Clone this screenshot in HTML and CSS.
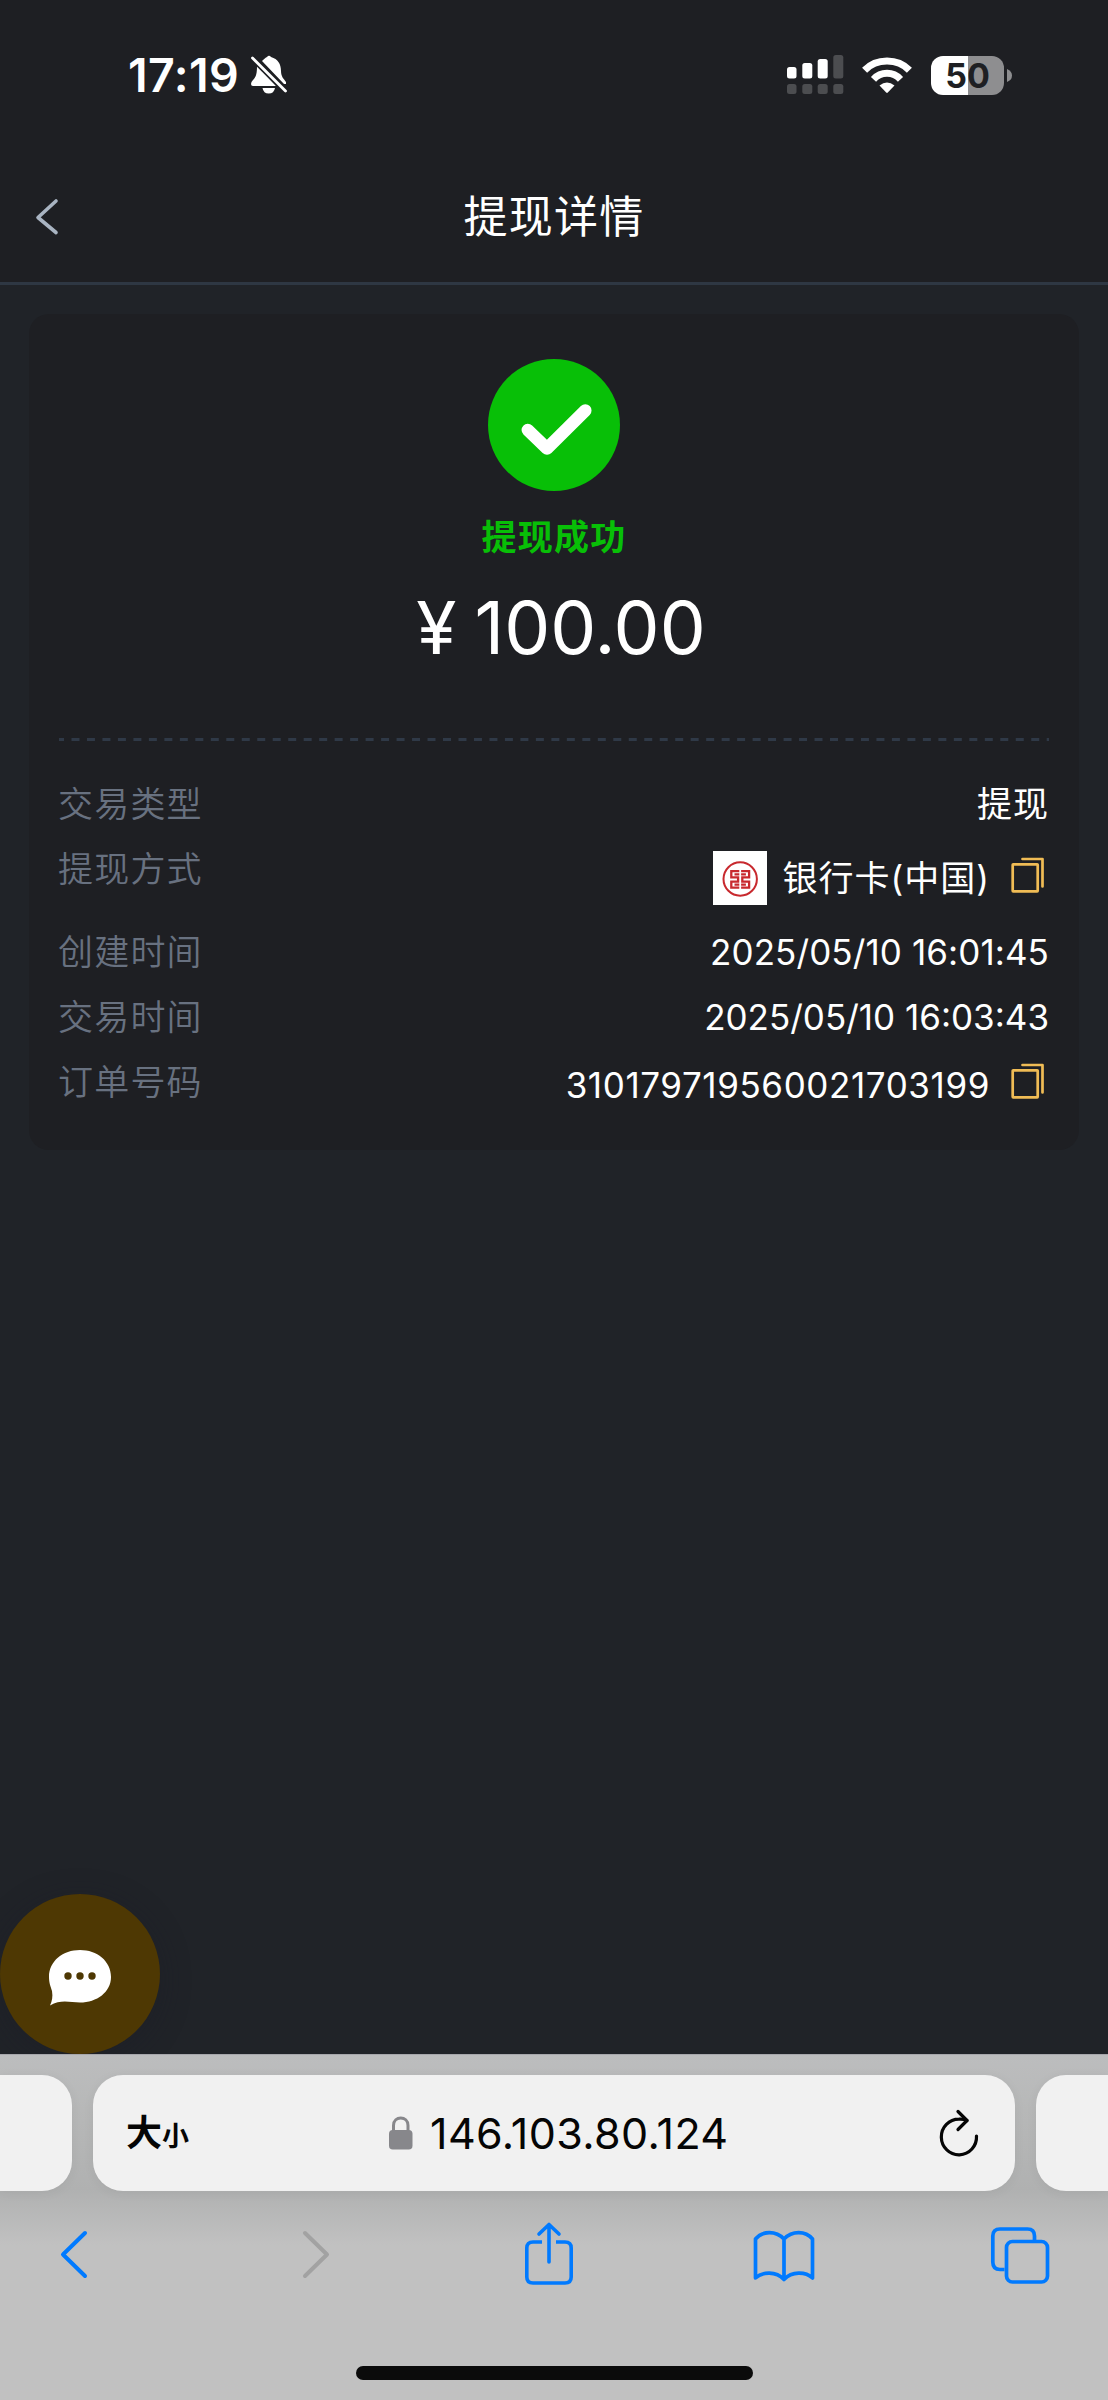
FILE: index.html
```html
<!DOCTYPE html>
<html lang="zh-CN">
<head>
<meta charset="utf-8">
<title>提现详情</title>
<link rel="stylesheet" href="styles.css">
</head>
<body>
<div class="screen">
  <div class="status">
    <span class="clock">17:19</span>
    <svg class="bell" width="38" height="42" viewBox="0 0 38 42">
      <path fill="#fff" d="M12 7C14 5 15 4 17 3Q19 .5 21 3C28 5 31 10 31 17C31 23 34 25 36 28V30H34ZM7 12L26 32H3Q1 32 1 30Q1 28 3 26C6 23 7 20 7 12ZM12.500 34H25Q24 39.500 18.700 39.500Q13.500 39.500 12.500 34Z"/>
      <path fill="none" stroke="#1e1f23" stroke-width="6" d="M2.500 4L35.500 37"/>
      <path fill="none" stroke="#fff" stroke-width="2.800" stroke-linecap="round" d="M2.500 4L35.500 37"/>
    </svg>
    <svg class="signal" width="57" height="40" viewBox="0 0 57 40">
      <g fill="#fff"><rect x="0" y="12" width="9.500" height="11.500" rx="2.500"/><rect x="15.300" y="8" width="10" height="15.500" rx="2.500"/><rect x="30.700" y="4" width="10" height="19.500" rx="2.500"/></g>
      <g fill="#4c4d50"><rect x="46.300" y="0" width="10" height="23.500" rx="2.500"/><rect x="0" y="29" width="9.500" height="10" rx="2.500"/><rect x="15.300" y="29" width="10" height="10" rx="2.500"/><rect x="30.700" y="29" width="10" height="10" rx="2.500"/><rect x="46.300" y="29" width="10" height="10" rx="2.500"/></g>
    </svg>
    <svg class="wifi" width="50" height="37" viewBox="0 0 50 37">
      <g fill="none" stroke="#fff" stroke-width="7">
        <path d="M2.600 13.200Q11.500 4 25 4Q38.500 4 47.400 13.200"/><path d="M11.500 22.300Q17 16.300 25 16.300Q33 16.300 38.500 22.300"/>
      </g>
      <path fill="#fff" d="M17.500 28.500Q25 22.500 32.500 28.500L25.800 35.600Q25 36.400 24.200 35.600Z"/>
    </svg>
    <div class="battery"><span>50</span></div>
    <svg class="nub" width="5" height="13" viewBox="0 0 5 13"><path fill="#8e8e90" d="M0 0Q5 2 5 6.500Q5 11 0 13Z"/></svg>
  </div>
  <header class="nav">
    <svg width="24" height="38" viewBox="0 0 24 38"><path fill="none" stroke="#a9b4c2" stroke-width="3.600" stroke-linecap="round" stroke-linejoin="round" d="M21 3L3 19.500L21 34.500"/></svg>
    <h1>提现详情</h1>
  </header>
  <main>
    <section class="card">
      <svg class="ok" width="132" height="132" viewBox="0 0 132 132"><circle cx="66" cy="66" r="66" fill="#08bf07"/><path fill="none" stroke="#fff" stroke-width="12.500" stroke-linecap="round" stroke-linejoin="round" d="M39.800 71L59 89.500L97.300 51.500"/></svg>
      <p class="state">提现成功</p>
      <p class="amount"><span>¥</span>100.00</p>
      <svg class="dash" width="990" height="3" viewBox="0 0 990 3"><path stroke="#2f3947" stroke-width="3" stroke-dasharray="8 7.480" stroke-dashoffset="3" d="M0 1.500H990"/></svg>
      <dl>
        <div class="row"><dt>交易类型</dt><dd class="cjk">提现</dd></div>
        <div class="row method"><dt>提现方式</dt><dd>
          <svg class="bank" width="54" height="54" viewBox="0 0 54 54"><path fill="#fff" d="M0 0H54V54H0Z"/><circle cx="27.200" cy="28" r="16.700" fill="none" stroke="#c8292e" stroke-width="2"/><path fill="none" stroke="#c8292e" stroke-width="2.300" d="M26.300 20.200H18.300V26.300H25.100V30.600H18.300V36.700H26.300M28.100 20.200H36.100V26.300H29.300V30.600H36.100V36.700H28.100M21.500 23.300H26.300M28.100 23.300H32.900M21.500 33.600H26.300M28.100 33.600H32.900"/></svg>
          <span class="cjk">银行卡(中国)</span>
          <svg class="copy" width="34" height="36" viewBox="0 0 34 36"><g fill="none" stroke="#f0bc55" stroke-width="2.700" stroke-linejoin="round" stroke-linecap="round"><rect x="1.700" y="7.300" width="25" height="27" rx=".5"/><path d="M11.500 2H31.500V29.500"/></g></svg>
        </dd></div>
        <div class="row"><dt>创建时间</dt><dd class="created">2025/05/10 16:01:45</dd></div>
        <div class="row"><dt>交易时间</dt><dd>2025/05/10 16:03:43</dd></div>
        <div class="row order"><dt>订单号码</dt><dd>
          <span class="number">310179719560021703199</span>
          <svg class="copy" width="34" height="36" viewBox="0 0 34 36"><g fill="none" stroke="#f0bc55" stroke-width="2.700" stroke-linejoin="round" stroke-linecap="round"><rect x="1.700" y="7.300" width="25" height="27" rx=".5"/><path d="M11.500 2H31.500V29.500"/></g></svg>
        </dd></div>
      </dl>
    </section>
    <div class="chat"><svg width="64" height="58" viewBox="0 0 64 58"><path fill="#fff" d="M32 1C49 1 63 12 63 28C63 43 49 53.500 32 53.500C22 53.500 13 50 2 56.500C4 52 5 48 4 42C2.500 37 1 34 1 28C1 12 15 1 32 1Z"/><g fill="#4e3803"><circle cx="20" cy="27" r="3.700"/><circle cx="32" cy="27" r="3.700"/><circle cx="44" cy="27" r="3.700"/></g></svg></div>
  </main>
  <footer class="safari">
    <div class="tabs">
      <div class="tab side left"></div>
      <div class="tab address">
        <span class="size">大<small>小</small></span>
        <svg class="lock" width="24" height="34" viewBox="0 0 24 34"><path fill="none" stroke="#87878b" stroke-width="3" d="M4.500 16V9.500C4.500-.5 19-.5 19 9.500V16"/><rect y="14" width="23.500" height="19.500" rx="3.800" fill="#87878b"/></svg>
        <span class="host">146.103.80.124</span>
        <svg class="reload" width="42" height="48" viewBox="0 0 42 48"><g fill="none" stroke="#050505" stroke-width="3.200" stroke-linecap="round" stroke-linejoin="round"><path d="M38.500 27A17.600 17.800 0 1 1 21 10.200Q25 9.800 29 11.500"/><path d="M20 2.500L29 11.500L20 20.500"/></g></svg>
      </div>
      <div class="tab side right"></div>
    </div>
    <div class="tools">
      <svg width="30" height="62" viewBox="0 0 30 62"><path fill="none" stroke="#007aff" stroke-width="4" stroke-linecap="round" stroke-linejoin="round" d="M26 11L4 32.500L26 54"/></svg>
      <svg class="forward" width="30" height="62" viewBox="0 0 30 62"><path fill="none" stroke="#a2a2a2" stroke-width="4" stroke-linecap="round" stroke-linejoin="round" d="M4 11L26 32.500L4 54"/></svg>
      <svg class="share" width="50" height="64" viewBox="0 0 50 64"><g fill="none" stroke="#007aff" stroke-width="3.600" stroke-linecap="round" stroke-linejoin="round"><path stroke-linecap="butt" d="M18 20H9Q2.800 20 2.800 26V55Q2.800 61 9 61H41Q47.200 61 47.200 55V26Q47.200 20 41 20H32"/><path d="M25 40V2.500M15 12L25 2.500L35 12"/></g></svg>
      <svg class="book" width="62" height="62" viewBox="0 0 62 62"><path fill="none" stroke="#007aff" stroke-width="3.700" stroke-linecap="round" stroke-linejoin="round" d="M31 17C23 8.500 9.500 8.500 2.500 17V56C9.500 49.500 23 49 31 57.500C39 49 52.500 49.500 59.500 56V17C52.500 8.500 39 8.500 31 17V57"/></svg>
      <svg class="windows" width="60" height="62" viewBox="0 0 60 62"><g fill="none" stroke="#007aff" stroke-width="3.700"><path d="M14.500 47.500H10Q2.800 47.500 2.800 40V14Q2.800 7 10 7H37.500Q44.500 7 44.500 14V18"/><rect x="16.500" y="19.500" width="41" height="40.500" rx="6"/></g></svg>
    </div>
    <div class="home"></div>
  </footer>
</div>
</body>
</html>
```

FILE: styles.css
```css
* { box-sizing: border-box; }
body, h1, p, dl, dt, dd { margin: 0; }
body { font-family: Inter, "Noto Sans CJK SC", sans-serif; background: #202328; color: #fff; }
svg { display: block; flex: none; }
.screen { width: 1108px; height: 2400px; display: flex; flex-direction: column; overflow: hidden; }

.status { height: 150px; flex: none; display: flex; align-items: center; padding: 0 96px 0 128px; background: #1e1f23; }
.clock { width: 122px; font-size: 46.500px; line-height: 60px; font-weight: 600; white-space: nowrap; letter-spacing: .4px; }
.signal { margin-left: auto; }
.wifi { margin-left: 18px; }
.battery { width: 73px; height: 39px; margin-left: 19px; border-radius: 12px; background: linear-gradient(90deg, #fff 37px, #8e8e90 37px); color: #1e1f23; font-weight: 700; font-size: 34px; line-height: 39px; text-align: center; }
.nub { margin-left: 3px; }

.nav { height: 135px; flex: none; display: grid; grid-template-columns: 60px 1fr 60px; align-items: center; padding: 2px 35px 0; background: #1e1f23; border-bottom: 3px solid #2e3743; }
.nav h1 { font-size: 44px; line-height: 60px; font-weight: 400; letter-spacing: 1.2px; text-align: center; }

main { flex: 1; padding: 29px 29px 0; display: flex; flex-direction: column; justify-content: space-between; }
.card { height: 836px; padding: 45px 30px 0; border-radius: 20px; background: #1e1f23; display: flex; flex-direction: column; align-items: center; }
.state { margin-top: 21px; font-size: 35px; line-height: 50px; font-weight: 600; letter-spacing: 1.2px; color: #08bf07; }
.amount { height: 100px; line-height: 100px; margin-top: 16px; font-size: 73px; white-space: nowrap; padding-left: 14px; }
.amount span { margin-right: 18px; }
.dash { margin-top: 60px; }
dl { width: 990px; margin-top: 31px; }
.row { height: 65.300px; display: flex; justify-content: space-between; font-size: 35px; line-height: 65px; }
.method { height: 82.500px; }
.order { height: 70px; }
dt { color: #687180; font-weight: 350; letter-spacing: 1.200px; margin-left: -1px; }
dd { display: flex; align-items: center; white-space: nowrap; }
.cjk { letter-spacing: 1px; }
.bank { margin: -2px 15px 0 0; }
.copy { margin: -8px 4px 0 21px; }
.created { letter-spacing: .1px; }
.number { letter-spacing: .6px; }
.chat { width: 160px; height: 160px; margin-left: -29px; border-radius: 50%; background: #4e3803; display: flex; align-items: center; justify-content: center; padding-top: 7px; box-shadow: 0 6px 30px rgba(28, 28, 38, .4); }

.safari { height: 346px; flex: none; background: linear-gradient(#bcbdbe, #b7b8b8 55px, #b0b1b1 135px, #c1c1c1 190px); border-top: 1px solid #a6a6ab; color: #050505; }
.tabs { display: flex; gap: 21px; padding-top: 20px; }
.tab { height: 116px; border-radius: 30px; background: #f1f1f1; box-shadow: 0 2px 12px rgba(0, 0, 0, .05); }
.side { width: 72px; }
.left { border-radius: 0 30px 30px 0; }
.right { border-radius: 30px 0 0 30px; }
.address { width: 922px; display: flex; align-items: center; padding: 0 35px 0 33px; }
.size { width: 263px; display: flex; align-items: baseline; font-size: 36px; line-height: 50px; font-weight: 600; padding-top: 4px; }
.size small { font-size: 27px; }
.host { margin-left: 17px; font-size: 43px; line-height: 60px; letter-spacing: .4px; white-space: nowrap; }
.reload { margin-left: auto; }
.tools { display: flex; padding: 31px 58px 0 59px; }
.forward { margin-left: 212px; }
.share { margin-left: 193px; }
.book { margin-left: 179px; }
.windows { margin-left: 175px; }
.home { width: 397px; height: 14px; margin: 80px auto 0; border-radius: 7px; background: #0b0b0b; }
```
